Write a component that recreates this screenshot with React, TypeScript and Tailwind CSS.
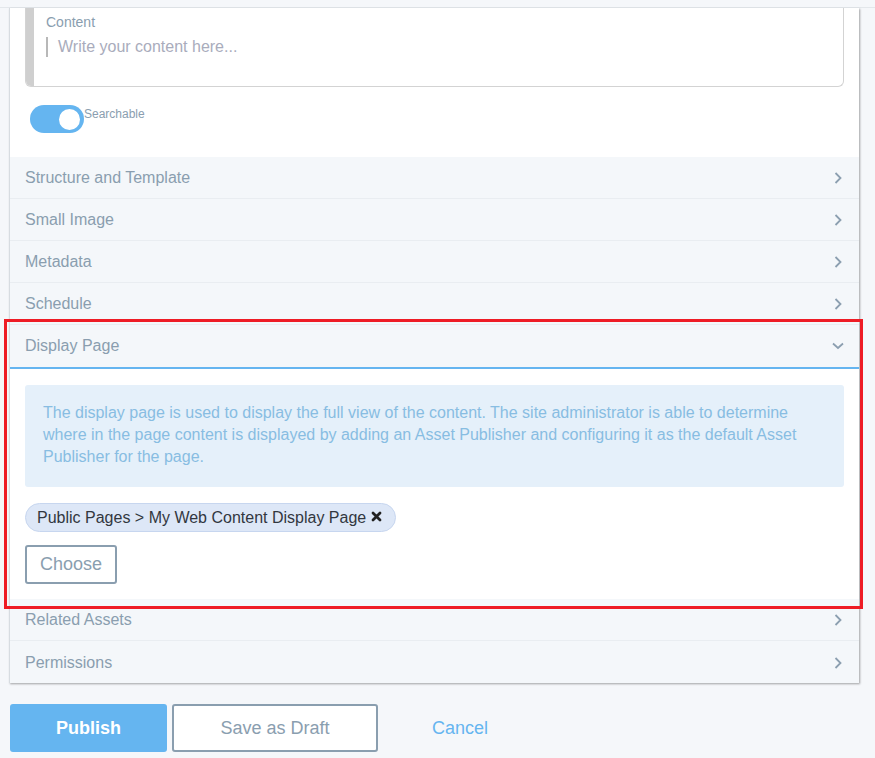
import React from 'react';

// Collapsible sections of the web content form
const beforeSections = ['Structure and Template', 'Small Image', 'Metadata', 'Schedule'];
const afterSections = ['Related Assets', 'Permissions'];

const ChevronRight: React.FC = () => (
  <svg width="10" height="14" viewBox="0 0 10 14" fill="none" className="text-[#8c9fb0]">
    <path d="M2.5 2 L7.5 7 L2.5 12" stroke="currentColor" strokeWidth="1.8" />
  </svg>
);

const ChevronDown: React.FC = () => (
  <svg width="14" height="10" viewBox="0 0 14 10" fill="none" className="text-[#8c9fb0]">
    <path d="M2 2.5 L7 7 L12 2.5" stroke="currentColor" strokeWidth="1.8" />
  </svg>
);

const SectionRow: React.FC<{ title: string; last?: boolean }> = ({ title, last }) => (
  <div
    className={`flex h-[42px] items-center justify-between bg-[#f4f7fa] pl-[15px] pr-[16px] pt-[1px] ${
      last ? '' : 'border-b border-[#e9edf1]'
    }`}
  >
    <span className="text-[16px] text-[#8a9eaf]">{title}</span>
    <ChevronRight />
  </div>
);

export default function App() {
  return (
    <div className="relative min-h-[758px] w-[875px] bg-[#f5f7fa] font-['Liberation_Sans',Arial,sans-serif]">
      {/* top rule */}
      <div className="h-[8px] border-b border-[#e3e7eb]" />

      {/* Form panel */}
      <div className="ml-[9px] w-[850px] border-l border-[#d7dce1] bg-white shadow-[1px_1px_2px_rgba(0,0,0,0.35)]">
        {/* Content editor */}
        <div className="px-[15px]">
          <div className="flex h-[79px] rounded-b-[6px] border-x border-b border-[#d3d3d3] overflow-hidden">
            <div className="w-[8px] bg-[#cfcfcf]" />
            <div className="pl-[12px] pt-[6px]">
              <div className="text-[14px] leading-[16px] text-[#8a9eaf]">Content</div>
              <div className="mt-[5px] flex items-center">
                <span className="h-[20px] w-[2px] bg-[#b8b8b8]" />
                <span className="ml-[10px] text-[16px] text-[#a9acbc]">Write your content here...</span>
              </div>
            </div>
          </div>
        </div>

        {/* Searchable toggle */}
        <div className="flex h-[70px] items-start pl-[20px] pt-[18px]">
          <div className="flex h-[28px] w-[54px] items-center justify-end rounded-full bg-[#65b5f0] pr-[2px]">
            <div className="h-[25px] w-[25px] rounded-full border-2 border-[#65b5f0] bg-white" />
          </div>
          <span className="mt-[1px] text-[12px] leading-[16px] text-[#8a9eaf]">Searchable</span>
        </div>

        {beforeSections.map((s) => (
          <SectionRow key={s} title={s} />
        ))}

        {/* Expanded: Display Page */}
        <div className="flex h-[44px] items-center justify-between border-b-2 border-[#65b5f0] bg-[#f4f7fa] pl-[15px] pr-[14px]">
          <span className="text-[16px] text-[#8a9eaf]">Display Page</span>
          <ChevronDown />
        </div>
        <div className="bg-white px-[15px] pt-[16px] pb-[15px]">
          <div className="rounded-[3px] bg-[#e5f0fa] px-[18px] pt-[17px] pb-[19px] text-[16px] leading-[22px] text-[#88bde2]">
            The display page is used to display the full view of the content. The site administrator is able to determine
            <br />
            where in the page content is displayed by adding an Asset Publisher and configuring it as the default Asset
            <br />
            Publisher for the page.
          </div>
          <div className="mt-[16px] flex">
            <div className="flex h-[29px] items-center gap-[5px] rounded-full border border-[#c7d6ef] bg-[#dde7f7] pl-[11px] pr-[13px] text-[16px] text-[#32373f]">
              <span>Public Pages &gt; My Web Content Display Page</span>
              <svg width="11" height="11" viewBox="0 0 11 11" className="mb-[3px]">
                <path d="M2 2 L9 9 M9 2 L2 9" stroke="#222" strokeWidth="2.8" strokeLinecap="round" />
              </svg>
            </div>
          </div>
          <button className="mt-[13px] h-[39px] w-[92px] rounded-[3px] border-2 border-[#8a9eaf] bg-white text-[18px] text-[#8a9eaf]">
            Choose
          </button>
        </div>

        {afterSections.map((s, i) => (
          <SectionRow key={s} title={s} last={i === afterSections.length - 1} />
        ))}
      </div>

      {/* Action buttons */}
      <div className="mt-[21px] flex items-center pl-[10px]">
        <button className="h-[48px] w-[157px] rounded-[3px] bg-[#65b5f0] text-[18px] font-bold text-white">
          Publish
        </button>
        <button className="ml-[5px] h-[48px] w-[206px] rounded-[3px] border-2 border-[#8a9eaf] bg-white text-[18px] text-[#8a9eaf]">
          Save as Draft
        </button>
        <button className="ml-[54px] text-[18px] text-[#65b5f0]">Cancel</button>
      </div>

      {/* Annotation highlight */}
      <div className="pointer-events-none absolute left-[4px] top-[319px] h-[290px] w-[859px] border-[3px] border-[#ee1c25]" />
    </div>
  );
}
